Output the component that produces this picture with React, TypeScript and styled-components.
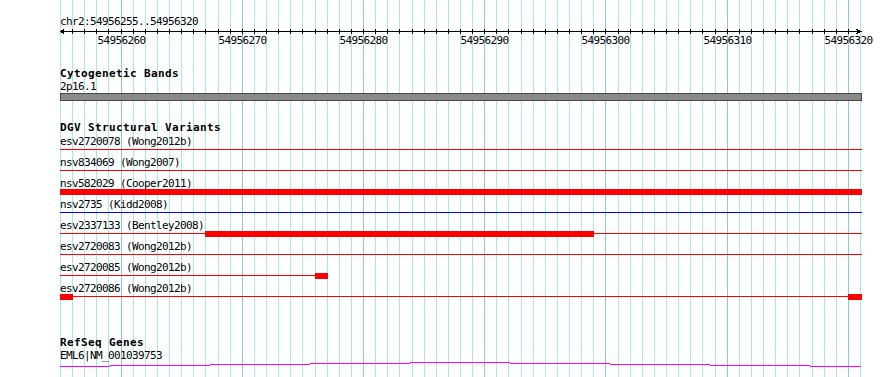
import React from "react";
import styled, { createGlobalStyle } from "styled-components";

const START = 54956255;
const END = 54956320;
const LEFT = 60;
const SPAN = 800;
const NBP = END - START + 1; // 66 bp shown

const px = (i: number) => Math.round(LEFT + (i * SPAN) / NBP);
const lx = (i: number) => px(i) - LEFT;
const xEnd = (e: number) => (e === NBP - 1 ? SPAN + 1 : lx(e + 1));

const Global = createGlobalStyle`
  html, body { margin: 0; padding: 0; background: #ffffff; }
  body { font-family: "DejaVu Sans Mono", "Liberation Mono", monospace; color: #000; }
`;

const Page = styled.div`
  position: relative;
  width: 890px;
  height: 377px;
  overflow: hidden;
  background: #ffffff;
`;

const GridLayer = styled.svg`
  position: absolute;
  left: 0;
  top: 0;
  width: 890px;
  height: 377px;
  z-index: 0;
`;

const Panel = styled.div`
  position: relative;
  z-index: 1;
  display: flex;
  flex-direction: column;
  padding-left: 60px;
  width: 802px;
`;

const SmallText = styled.div<{ $h?: number; $mt?: number }>`
  font-family: "DejaVu Sans Mono", "Liberation Mono", monospace;
  font-size: 11px;
  letter-spacing: -0.62px;
  line-height: 13px;
  height: ${(p) => p.$h ?? 13}px;
  margin-top: ${(p) => p.$mt ?? 0}px;
  white-space: nowrap;
  color: #000;
`;

const TrackTitle = styled.div<{ $mt: number }>`
  font-family: "DejaVu Sans Mono", "Liberation Mono", monospace;
  font-weight: bold;
  font-size: 11px;
  letter-spacing: 0.38px;
  line-height: 12px;
  height: 12px;
  margin-top: ${(p) => p.$mt}px;
  white-space: nowrap;
  color: #000;
`;

const RulerSvg = styled.svg`
  display: block;
  width: 802px;
  height: 7px;
`;

const RulerLabels = styled.div`
  position: relative;
  width: 802px;
  height: 13px;
`;

const RulerLabel = styled.span`
  position: absolute;
  top: 0;
  transform: translateX(-50%);
  font-family: "DejaVu Sans Mono", "Liberation Mono", monospace;
  font-size: 11px;
  letter-spacing: -0.62px;
  line-height: 13px;
  white-space: nowrap;
`;

const CytoBar = styled.div`
  box-sizing: border-box;
  width: 802px;
  height: 8px;
  background: #8a8a8a;
  border: 1px solid #474747;
`;

const Rows = styled.div`
  display: flex;
  flex-direction: column;
  margin-top: 1px;
`;

const Lane = styled.div`
  position: relative;
  width: 802px;
  height: 8px;
`;

const FeatureLine = styled.div<{ $color: string }>`
  position: absolute;
  top: 1px;
  height: 1px;
  background: ${(p) => p.$color};
`;

const FeatureBlock = styled.div<{ $color: string }>`
  position: absolute;
  top: -1px;
  height: 6px;
  background: ${(p) => p.$color};
`;

const GeneSvg = styled.svg`
  display: block;
  width: 802px;
  height: 6px;
`;

type Range = [number, number];
type Variant = { name: string; color: string; lines: Range[]; blocks: Range[] };

const RED = "#ff0000";
const BLUE = "#0000ff";

const variants: Variant[] = [
  { name: "esv2720078 (Wong2012b)", color: RED, lines: [[0, 65]], blocks: [] },
  { name: "nsv834069 (Wong2007)", color: RED, lines: [[0, 65]], blocks: [] },
  { name: "nsv582029 (Cooper2011)", color: RED, lines: [], blocks: [[0, 65]] },
  { name: "nsv2735 (Kidd2008)", color: BLUE, lines: [[0, 65]], blocks: [] },
  { name: "esv2337133 (Bentley2008)", color: RED, lines: [[0, 65]], blocks: [[12, 43]] },
  { name: "esv2720083 (Wong2012b)", color: RED, lines: [[0, 65]], blocks: [] },
  { name: "esv2720085 (Wong2012b)", color: RED, lines: [[0, 20]], blocks: [[21, 21]] },
  { name: "esv2720086 (Wong2012b)", color: RED, lines: [[0, 65]], blocks: [[0, 0], [65, 65]] },
];

const geneSegments: [number, number, number][] = [
  [0, 50, 4],
  [50, 150, 3],
  [150, 250, 2],
  [250, 350, 1],
  [350, 450, 0],
  [450, 550, 1],
  [550, 650, 2],
  [650, 750, 3],
  [750, 801, 4],
];

const gridIdx = Array.from({ length: NBP + 1 }, (_, i) => i);
const isMajor = (i: number) => (START + i) % 10 === 0;

const Grid = () => (
  <GridLayer viewBox="0 0 890 377" shapeRendering="crispEdges">
    {gridIdx.map((i) => (
      <rect key={i} x={px(i)} y={0} width={1} height={377} fill={isMajor(i) ? "#8cc6e6" : "#a8e8ec"} />
    ))}
  </GridLayer>
);

const Ruler = () => (
  <>
    <RulerSvg viewBox="0 0 802 7" shapeRendering="crispEdges">
      <rect x={0} y={4} width={801} height={1} fill="#000" />
      {gridIdx.slice(1, NBP).map((i) => (
        <rect key={i} x={lx(i)} y={2} width={1} height={5} fill="#000" />
      ))}
      <path d="M4.5 2.5 L0.5 4.5 L4.5 6.5" stroke="#000" strokeWidth={1} fill="none" />
      <path d="M796.5 2.5 L800.5 4.5 L796.5 6.5" stroke="#000" strokeWidth={1} fill="none" />
    </RulerSvg>
    <RulerLabels>
      {gridIdx.filter(isMajor).map((i) => (
        <RulerLabel key={i} style={{ left: lx(i) + 0.5 }}>
          {START + i}
        </RulerLabel>
      ))}
    </RulerLabels>
  </>
);

const VariantRow = ({ v }: { v: Variant }) => (
  <>
    <SmallText>{v.name}</SmallText>
    <Lane>
      {v.lines.map(([s, e], k) => (
        <FeatureLine key={`l${k}`} $color={v.color} style={{ left: lx(s), width: xEnd(e) - lx(s) + 1 }} />
      ))}
      {v.blocks.map(([s, e], k) => (
        <FeatureBlock key={`b${k}`} $color={v.color} style={{ left: lx(s), width: xEnd(e) - lx(s) + 1 }} />
      ))}
    </Lane>
  </>
);

export default function App() {
  return (
    <Page>
      <Global />
      <Grid />
      <Panel>
        <SmallText $mt={15} $h={12}>
          chr2:54956255..54956320
        </SmallText>
        <Ruler />

        <TrackTitle $mt={21}>Cytogenetic Bands</TrackTitle>
        <SmallText>2p16.1</SmallText>
        <CytoBar />

        <TrackTitle $mt={21}>DGV Structural Variants</TrackTitle>
        <Rows>
          {variants.map((v) => (
            <VariantRow key={v.name} v={v} />
          ))}
        </Rows>

        <TrackTitle $mt={34}>RefSeq Genes</TrackTitle>
        <SmallText>EML6|NM_001039753</SmallText>
        <GeneSvg viewBox="0 0 802 6" shapeRendering="crispEdges">
          {geneSegments.map(([a, b, y], k) => (
            <rect key={k} x={a} y={y} width={b - a} height={1} fill="#ff00ff" />
          ))}
        </GeneSvg>
      </Panel>
    </Page>
  );
}
